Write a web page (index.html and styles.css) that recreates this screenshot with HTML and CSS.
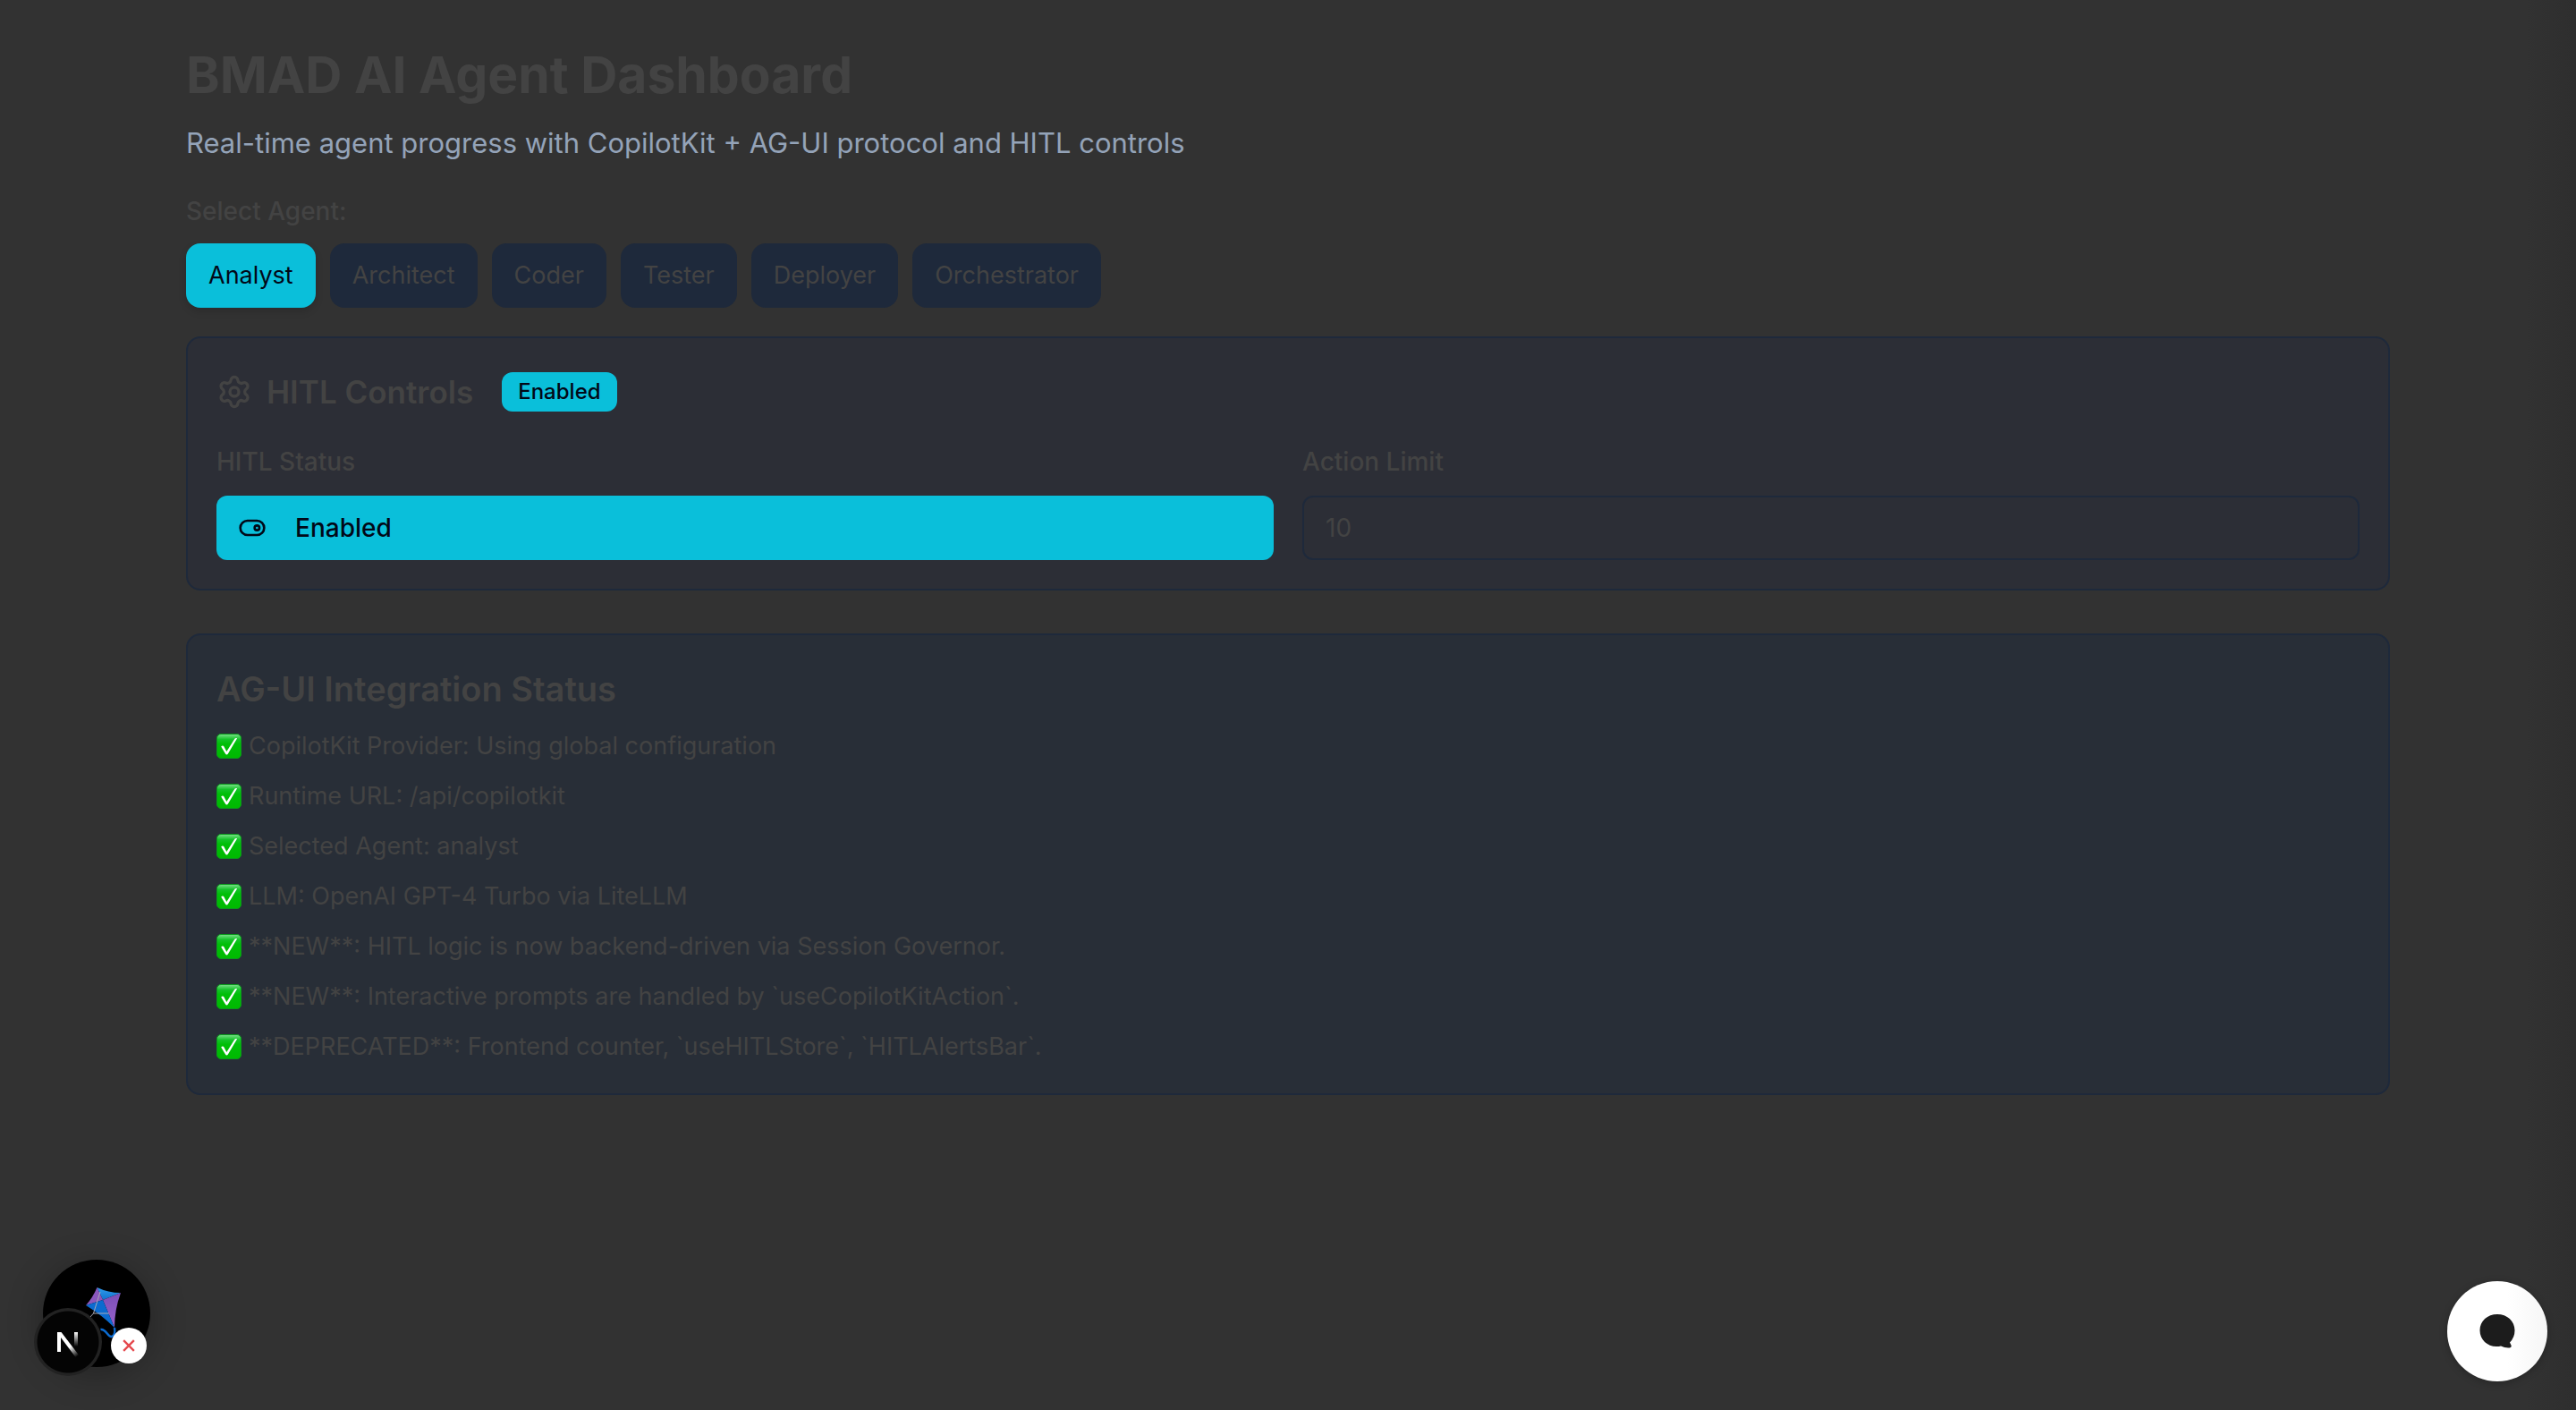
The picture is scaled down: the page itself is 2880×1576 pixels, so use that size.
FILE: index.html
```html
<!DOCTYPE html>
<html lang="en">
<head>
<meta charset="utf-8">
<title>BMAD AI Agent Dashboard</title>
<link rel="stylesheet" href="styles.css">
</head>
<body>
<svg class="sprite" aria-hidden="true">
  <defs>
    <linearGradient id="check-fill" x1="0" y1="0" x2="0" y2="1">
      <stop offset="0" stop-color="#7be08a"/>
      <stop offset="0.22" stop-color="#14c328"/>
      <stop offset="0.4" stop-color="#00bf08"/>
      <stop offset="1" stop-color="#00b900"/>
    </linearGradient>
  </defs>
  <symbol id="check" viewBox="0 0 28 28">
    <rect x="0.5" y="0.5" width="27" height="27" rx="4.5" fill="url(#check-fill)" stroke="#0a9a1c"/>
    <path d="M5.2 14.6c1.2-1.6 2.7-1.2 3.5.5l2.6 5L20.2 5.9c.7-1 2-1.200 2.900-.6L12.900 22.600c-.8 1.300-2.200 1.300-2.900 0z" fill="#fff"/>
  </symbol>
</svg>

<main class="page">
  <header class="intro">
    <h1 class="title">BMAD AI Agent Dashboard</h1>
    <p class="subtitle">Real-time agent progress with CopilotKit + AG-UI protocol and HITL controls</p>
  </header>

  <section class="agents" aria-labelledby="agents-label">
    <p class="label" id="agents-label">Select Agent:</p>
    <div class="agent-list">
      <button class="agent agent-active" type="button" aria-pressed="true">Analyst</button>
      <button class="agent" type="button">Architect</button>
      <button class="agent" type="button">Coder</button>
      <button class="agent" type="button">Tester</button>
      <button class="agent" type="button">Deployer</button>
      <button class="agent" type="button">Orchestrator</button>
    </div>
  </section>

  <section class="card controls">
    <div class="controls-head">
      <svg class="gear" viewBox="0 0 24 24" aria-hidden="true"><path d="M9.671 4.136a2.34 2.34 0 0 1 4.659 0 2.34 2.34 0 0 0 3.319 1.915 2.34 2.34 0 0 1 2.33 4.033 2.34 2.34 0 0 0 0 3.831 2.34 2.34 0 0 1-2.33 4.033 2.34 2.34 0 0 0-3.319 1.915 2.34 2.34 0 0 1-4.659 0 2.34 2.34 0 0 0-3.32-1.915 2.34 2.34 0 0 1-2.33-4.033 2.34 2.34 0 0 0 0-3.831A2.34 2.34 0 0 1 6.35 6.051a2.34 2.34 0 0 0 3.319-1.915"/><circle cx="12" cy="12" r="3"/></svg>
      <h2 class="controls-title">HITL Controls</h2>
      <span class="badge">Enabled</span>
    </div>
    <div class="fields">
      <div class="field">
        <span class="label field-label" id="status-label">HITL Status</span>
        <button class="toggle" type="button" aria-describedby="status-label">
          <svg class="toggle-icon" viewBox="0 0 24 24" aria-hidden="true"><rect x="2" y="6" width="20" height="12" rx="6"/><circle cx="16" cy="12" r="2"/></svg>
          Enabled
        </button>
      </div>
      <div class="field">
        <label class="label field-label" for="limit">Action Limit</label>
        <input class="limit" id="limit" type="text" inputmode="numeric" value="10">
      </div>
    </div>
  </section>

  <section class="card status">
    <h2 class="status-title">AG-UI Integration Status</h2>
    <ul class="status-list">
      <li class="status-item"><svg class="check" aria-hidden="true"><use href="#check"/></svg>CopilotKit Provider: Using global configuration</li>
      <li class="status-item"><svg class="check" aria-hidden="true"><use href="#check"/></svg>Runtime URL: /api/copilotkit</li>
      <li class="status-item"><svg class="check" aria-hidden="true"><use href="#check"/></svg>Selected Agent: analyst</li>
      <li class="status-item"><svg class="check" aria-hidden="true"><use href="#check"/></svg>LLM: OpenAI GPT-4 Turbo via LiteLLM</li>
      <li class="status-item"><svg class="check" aria-hidden="true"><use href="#check"/></svg>**NEW**: HITL logic is now backend-driven via Session Governor.</li>
      <li class="status-item"><svg class="check" aria-hidden="true"><use href="#check"/></svg>**NEW**: Interactive prompts are handled by `useCopilotKitAction`.</li>
      <li class="status-item"><svg class="check" aria-hidden="true"><use href="#check"/></svg>**DEPRECATED**: Frontend counter, `useHITLStore`, `HITLAlertsBar`.</li>
    </ul>
  </section>
</main>

<div class="dev-tools">
  <button class="kite" type="button" aria-label="Open inspector">
    <svg class="kite-icon" viewBox="0 0 120 120" aria-hidden="true">
      <defs>
        <linearGradient id="kite-blue" x1="0" y1="0" x2="0" y2="1"><stop offset="0" stop-color="#2f9cec"/><stop offset="1" stop-color="#1272cf"/></linearGradient>
        <linearGradient id="kite-purple" x1="0" y1="0" x2="0" y2="1"><stop offset="0" stop-color="#7a4eb8"/><stop offset="1" stop-color="#9a63cb"/></linearGradient>
      </defs>
      <path d="M60.500 31Q73 37 87 37L67 45z" fill="url(#kite-blue)"/>
      <path d="M60.500 31Q56 42 48 51L67 45z" fill="#8a58bd"/>
      <path d="M87 37Q80 56 80 76L67 45z" fill="url(#kite-purple)"/>
      <path d="M48 51Q66 62 80 76L67 45z" fill="#0b6bd0"/>
      <path d="M64 36L56.500 60H74M56.500 60L52 65" fill="none" stroke="#a9a9b5"/>
      <path d="M80 76q1.500 9-3.500 10c-4 .5-6-9-12-8" fill="none" stroke="#0b6bd0" stroke-width="2.500"/>
    </svg>
  </button>
  <button class="next" type="button" aria-label="Open Next.js Dev Tools">
    <svg class="next-icon" viewBox="0 0 76 76" aria-hidden="true">
      <defs>
        <linearGradient id="next-diag" gradientUnits="userSpaceOnUse" x1="42" y1="42" x2="50" y2="53"><stop stop-color="#fff"/><stop offset="1" stop-color="#fff" stop-opacity="0"/></linearGradient>
        <linearGradient id="next-stem" x1="0" y1="0" x2="0" y2="1"><stop stop-color="#fff"/><stop offset="1" stop-color="#fff" stop-opacity="0"/></linearGradient>
      </defs>
      <path d="M26 27h4.500L50 52.500l-3.500 2.500L30 33v16h-4z" fill="url(#next-diag)"/>
      <rect x="45" y="27" width="4" height="16" fill="url(#next-stem)"/>
    </svg>
  </button>
  <button class="dismiss" type="button" aria-label="Dismiss">
    <svg class="dismiss-icon" viewBox="0 0 12 12" aria-hidden="true"><path d="M1 1l10 10M11 1L1 11"/></svg>
  </button>
</div>

<button class="chat" type="button" aria-label="Open chat">
  <svg class="chat-icon" viewBox="0 0 40 40" aria-hidden="true"><path d="M20 1C9 1 .5 8.500.5 19S9 37 19 37q3 0 5-.6 5 2.600 10 2 2.300-.5 1.700-2.400l-1.700-3.600Q39.500 27 39.500 19C39.500 8.500 31 1 20 1z"/></svg>
</button>
</body>
</html>
```
FILE: styles.css
```css
* {
  box-sizing: border-box;
}

body {
  min-height: 100vh;
  margin: 0;
  background: linear-gradient(to left, #2e2e2e, #323232 56px);
  color: #434343;
  font-family: Inter, "Liberation Sans", sans-serif;
  font-size: 28px;
  line-height: 40px;
}

h1,
h2,
p,
ul {
  margin: 0;
  padding: 0;
}

button,
input {
  margin: 0;
  border: 0;
  color: inherit;
  font: inherit;
}

.sprite {
  position: absolute;
  width: 0;
  height: 0;
}

.page {
  display: flex;
  flex-direction: column;
  max-width: 2560px;
  margin: 0 auto;
  padding: 48px;
}

.intro,
.agents {
  display: flex;
  flex-direction: column;
  gap: 16px;
  margin-bottom: 32px;
}

.title {
  font-size: 57px;
  font-weight: 700;
  line-height: 72px;
}

.subtitle {
  color: #94a3b8;
  font-size: 31px;
  line-height: 48px;
}

.label {
  font-weight: 500;
}

.agent-list {
  display: flex;
  flex-wrap: wrap;
  gap: 16px;
}

.agent {
  height: 72px;
  padding: 0 25px;
  border-radius: 16px;
  background: #1e293b;
  font-size: 27px;
}

.agent-active {
  background: #0abfda;
  box-shadow: 0 4px 8px rgba(0, 0, 0, 0.15);
  color: #020817;
}

.card {
  padding: 32px;
  border: 2px solid #1e293b;
  border-radius: 16px;
}

.controls {
  margin-bottom: 48px;
  background: #2c2e36;
}

.controls-head {
  display: flex;
  align-items: center;
  gap: 16px;
  margin-bottom: 32px;
}

.gear {
  width: 40px;
  height: 40px;
  fill: none;
  stroke: currentColor;
  stroke-width: 2;
}

.controls-title {
  font-size: 35px;
  font-weight: 600;
  line-height: 56px;
}

.badge {
  height: 44px;
  margin-left: 16px;
  padding: 0 18px;
  border-radius: 12px;
  background: #0abfda;
  color: #020817;
  font-size: 24px;
  font-weight: 500;
  line-height: 44px;
}

.fields {
  display: grid;
  grid-template-columns: 1fr 1fr;
  gap: 32px;
}

.field {
  display: flex;
  flex-direction: column;
  gap: 20px;
}

.field-label {
  line-height: 36px;
}

.toggle {
  display: flex;
  align-items: center;
  gap: 32px;
  height: 72px;
  padding: 0 24px;
  border-radius: 12px;
  background: #0abfda;
  color: #020817;
  font-weight: 500;
}

.toggle-icon {
  width: 32px;
  height: 32px;
  fill: none;
  stroke: currentColor;
  stroke-width: 2;
}

.limit {
  width: 100%;
  height: 72px;
  padding: 0 24px;
  border: 2px solid #1e293b;
  border-radius: 12px;
  background: transparent;
}

.status {
  background: #282e37;
}

.status-title {
  margin-bottom: 16px;
  font-size: 38px;
  font-weight: 600;
  line-height: 56px;
}

.status-list {
  display: flex;
  flex-direction: column;
  gap: 16px;
  list-style: none;
  font-size: 27px;
}

.status-item {
  display: flex;
  align-items: center;
  gap: 8px;
}

.check {
  width: 28px;
  height: 28px;
}

.dev-tools {
  position: fixed;
  bottom: 36px;
  left: 38px;
  width: 130px;
  height: 132px;
}

.kite,
.next,
.dismiss,
.chat {
  padding: 0;
  border-radius: 50%;
}

.kite {
  position: absolute;
  top: 0;
  right: 0;
  width: 120px;
  height: 120px;
  background: #000;
  box-shadow: 0 8px 40px rgba(0, 0, 0, 0.3);
}

.kite-icon,
.next-icon {
  display: block;
  width: 100%;
  height: 100%;
}

.next {
  position: absolute;
  bottom: 2px;
  left: 0;
  width: 76px;
  height: 76px;
  background: radial-gradient(circle, #040404 34px, #222 35px);
}

.dismiss {
  position: absolute;
  right: 4px;
  bottom: 16px;
  display: grid;
  width: 40px;
  height: 40px;
  place-items: center;
  background: #fff;
}

.dismiss-icon {
  width: 14px;
  height: 14px;
  fill: none;
  stroke: #e5484d;
  stroke-width: 2;
}

.chat {
  position: fixed;
  right: 32px;
  bottom: 32px;
  display: grid;
  width: 112px;
  height: 112px;
  place-items: center;
  background: linear-gradient(to right, #fff 60%, #f6f6f6);
  box-shadow: 0 2px 8px rgba(0, 0, 0, 0.25);
}

.chat-icon {
  width: 40px;
  height: 40px;
  fill: #1c1c1c;
}
```
